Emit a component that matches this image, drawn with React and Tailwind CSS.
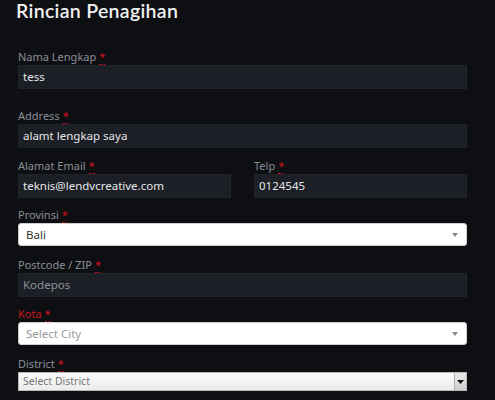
const font = { fontFamily: '"Noto Sans", "Open Sans", sans-serif' };

function Req() {
  return (
    <abbr title="required" className="ml-[3px] text-[#d0121b] no-underline border-b border-dotted border-[#d0121b]">
      *
    </abbr>
  );
}

function Field({ label, red, children, className = '' }) {
  return (
    <div className={`flex flex-col ${className}`}>
      <label className={`h-[14px] text-[11px] leading-[14px] ${red ? 'text-[#c4161c]' : 'text-[#8b9097]'}`}>
        {label}
        <Req />
      </label>
      {children}
    </div>
  );
}

function TextInput({ value, placeholder }) {
  return (
    <div className="mt-[1px] flex h-[24px] items-center border border-[#20232a] bg-[#1c1f25] px-[4px] text-[11.5px]">
      {value ? (
        <span className="text-[#e6e7e9]">{value}</span>
      ) : (
        <span className="text-[#8d9198]">{placeholder}</span>
      )}
    </div>
  );
}

function WhiteSelect({ value, placeholder }) {
  return (
    <div className="mt-[1px] flex h-[23px] items-center justify-between rounded-[3px] border border-[#cfcfcf] bg-white pl-[7px] pr-[8px] text-[11.5px]">
      {value ? (
        <span className="text-[#333]">{value}</span>
      ) : (
        <span className="text-[#999]">{placeholder}</span>
      )}
      <svg width="6" height="4" viewBox="0 0 6 4">
        <path d="M0 0h6L3 4z" fill="#888" />
      </svg>
    </div>
  );
}

export default function App() {
  return (
    <div className="h-[400px] w-[495px] overflow-hidden bg-[#0e0f13]" style={font}>
      <h2
        className="pl-[16px] pt-[1px] text-[19.5px] font-semibold leading-[20px] tracking-[0.3px] text-[#f1f1f1]"
        style={{ fontFamily: 'Lato, "Noto Sans", sans-serif' }}
      >
        Rincian Penagihan
      </h2>

      <div className="mr-[28px] ml-[18px] mt-[29px] flex flex-col">
        <Field label="Nama Lengkap">
          <TextInput value="tess" />
        </Field>

        <Field label="Address" className="mt-[20px]">
          <TextInput value="alamt lengkap saya" />
        </Field>

        <div className="mt-[11px] grid grid-cols-2 gap-x-[23px]">
          <Field label="Alamat Email">
            <TextInput value="teknis@lendvcreative.com" />
          </Field>
          <Field label="Telp">
            <TextInput value="0124545" />
          </Field>
        </div>

        <Field label="Provinsi" className="mt-[10px]">
          <WhiteSelect value="Bali" />
        </Field>

        <Field label="Postcode / ZIP" className="mt-[12px]">
          <TextInput placeholder="Kodepos" />
        </Field>

        <Field label="Kota" red className="mt-[10px]">
          <WhiteSelect placeholder="Select City" />
        </Field>

        <Field label="District" className="mt-[12px]">
          <div className="mt-[1px] flex h-[19px] items-stretch border border-[#b9b9b9] bg-gradient-to-b from-[#fafafa] to-[#ececec] text-[10.5px]">
            <span className="flex flex-1 items-center pl-[4px] text-[#777]">Select District</span>
            <span className="flex w-[12px] items-center justify-center border-l border-[#b0b0b0] bg-gradient-to-b from-[#e8e8e8] to-[#cfcfcf]">
              <svg width="7" height="4" viewBox="0 0 7 4">
                <path d="M0 0h7L3.5 4z" fill="#111" />
              </svg>
            </span>
          </div>
        </Field>
      </div>
    </div>
  );
}
